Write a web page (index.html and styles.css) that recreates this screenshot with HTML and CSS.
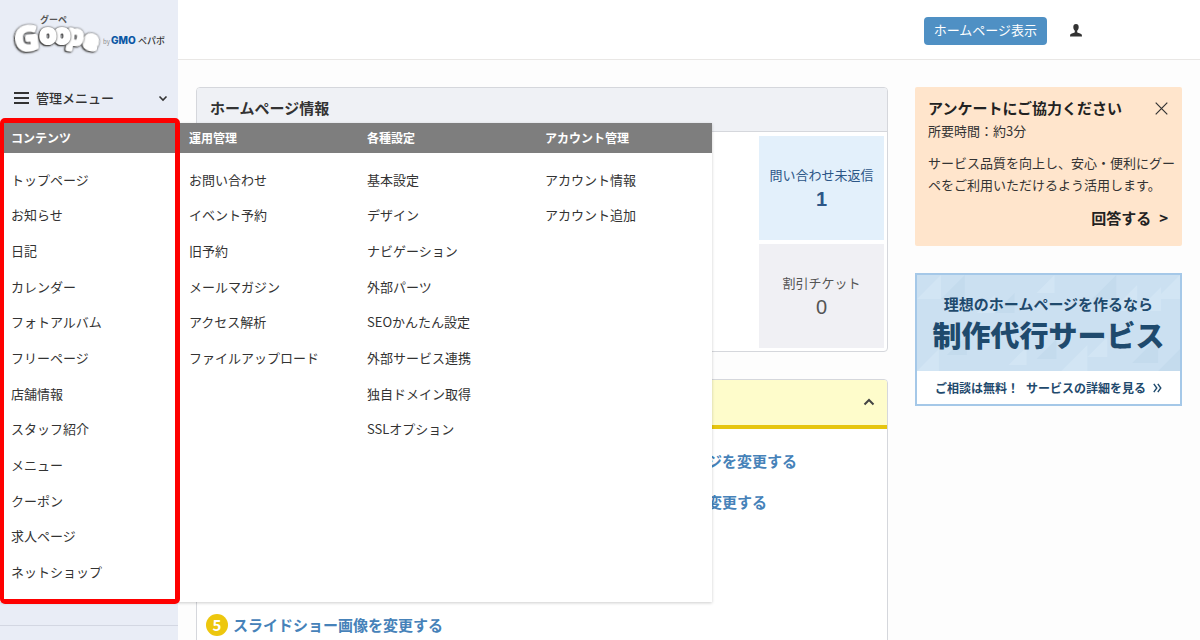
FILE: index.html
```html
<!DOCTYPE html>
<html lang="ja">
<head>
<meta charset="utf-8">
<title>グーペ 管理画面</title>
<link rel="stylesheet" href="styles.css">
</head>
<body>
<div class="app">
  <div class="sidebar">
    <a class="logo" href="#">
      <svg width="156" height="48" viewBox="0 0 156 48">
        <text class="logo-kana" x="29" y="13">グーペ</text>
        <g class="logo-word">
          <text x="72" y="39" transform="rotate(12 79 33)">e</text>
          <text x="56" y="34" transform="rotate(8 63 28)">p</text>
          <text x="43" y="33">o</text>
          <text x="29" y="33">o</text>
          <text class="logo-big" x="4" y="40" transform="rotate(-6 14 28)">G</text>
        </g>
        <text class="logo-by" x="92" y="34">by</text>
        <text class="logo-gmo" x="100" y="34">GMO</text>
        <text class="logo-pepabo" x="127" y="34">ペパボ</text>
      </svg>
    </a>
    <nav class="nav">
      <button class="nav-toggle" type="button" aria-expanded="true">
        <svg width="15" height="12" viewBox="0 0 15 12"><path d="M0 1h15M0 6h15M0 11h15" stroke="#333" stroke-width="2"/></svg>
        <span>管理メニュー</span>
        <svg class="chevron" width="10" height="8" viewBox="0 0 10 8"><path d="M1.500 2.500 5 6l3.500-3.500" fill="none" stroke="#333" stroke-width="1.600"/></svg>
      </button>
      <div class="mega">
        <section class="mega-col">
          <h2>コンテンツ</h2>
          <ul>
            <li><a href="#">トップページ</a></li>
            <li><a href="#">お知らせ</a></li>
            <li><a href="#">日記</a></li>
            <li><a href="#">カレンダー</a></li>
            <li><a href="#">フォトアルバム</a></li>
            <li><a href="#">フリーページ</a></li>
            <li><a href="#">店舗情報</a></li>
            <li><a href="#">スタッフ紹介</a></li>
            <li><a href="#">メニュー</a></li>
            <li><a href="#">クーポン</a></li>
            <li><a href="#">求人ページ</a></li>
            <li><a href="#">ネットショップ</a></li>
          </ul>
        </section>
        <section class="mega-col">
          <h2>運用管理</h2>
          <ul>
            <li><a href="#">お問い合わせ</a></li>
            <li><a href="#">イベント予約</a></li>
            <li><a href="#">旧予約</a></li>
            <li><a href="#">メールマガジン</a></li>
            <li><a href="#">アクセス解析</a></li>
            <li><a href="#">ファイルアップロード</a></li>
          </ul>
        </section>
        <section class="mega-col">
          <h2>各種設定</h2>
          <ul>
            <li><a href="#">基本設定</a></li>
            <li><a href="#">デザイン</a></li>
            <li><a href="#">ナビゲーション</a></li>
            <li><a href="#">外部パーツ</a></li>
            <li><a href="#">SEOかんたん設定</a></li>
            <li><a href="#">外部サービス連携</a></li>
            <li><a href="#">独自ドメイン取得</a></li>
            <li><a href="#">SSLオプション</a></li>
          </ul>
        </section>
        <section class="mega-col">
          <h2>アカウント管理</h2>
          <ul>
            <li><a href="#">アカウント情報</a></li>
            <li><a href="#">アカウント追加</a></li>
          </ul>
        </section>
        <div class="highlight"></div>
      </div>
    </nav>
    <div class="sidebar-rest"></div>
  </div>

  <div class="page">
    <header class="topbar">
      <button class="btn" type="button">ホームページ表示</button>
      <button class="user" type="button" aria-label="アカウント">
        <svg width="12" height="13" viewBox="0 0 12 13"><path d="M6 0C4.200 0 3.300 1.300 3.300 3c0 1.800.700 3 1.500 3.800v1.400C4.500 9 .600 9.300.200 10.800L0 12.500h12l-.200-1.700C11.400 9.300 7.500 9 7.200 8.200V6.800C8 6 8.700 4.800 8.700 3 8.700 1.300 7.800 0 6 0z" fill="#333"/></svg>
      </button>
    </header>

    <div class="content">
      <main class="main">
        <section class="panel">
          <h1 class="panel-head">ホームページ情報</h1>
          <div class="tiles">
            <a class="tile tile-new" href="#"><span>問い合わせ未返信</span><strong>1</strong></a>
            <a class="tile" href="#"><span>割引チケット</span><strong>0</strong></a>
          </div>
        </section>
        <section class="panel">
          <div class="guide-head">
            <button type="button" aria-label="閉じる">
              <svg width="12" height="8" viewBox="0 0 12 8"><path d="m1.500 6.500 4.500-4.500 4.500 4.500" fill="none" stroke="#444" stroke-width="2"/></svg>
            </button>
          </div>
          <ol class="steps">
            <li class="step-tail"><a href="#">ジを変更する</a></li>
            <li class="step-tail"><a href="#">変更する</a></li>
            <li class="step-last"><span class="num">5</span><a href="#">スライドショー画像を変更する</a></li>
          </ol>
        </section>
      </main>

      <aside class="aside">
        <section class="survey">
          <div class="survey-head">
            <h2>アンケートにご協力ください</h2>
            <button type="button" aria-label="閉じる">
              <svg width="13" height="13" viewBox="0 0 13 13"><path d="m.700.700 11.600 11.600M12.300.700.700 12.300" stroke="#333" stroke-width="1.200"/></svg>
            </button>
          </div>
          <p>所要時間：約3分</p>
          <p class="survey-text">サービス品質を向上し、安心・便利にグー<br>ペをご利用いただけるよう活用します。</p>
          <a class="answer" href="#"><span>回答する</span><span>&gt;</span></a>
        </section>

        <a class="banner" href="#">
          <span class="banner-top">
            <svg class="banner-bg" viewBox="0 0 264 96" preserveAspectRatio="none">
              <path d="M0 24 24 0v24zM60 38l18-18v18zM120 18 138 0v18zM195 36l26-26v26zM221 36l24-24v24zM240 24 264 0v24zM145 96l26-26v26zM171 82l20-20v20zM0 96l22-22v22zM92 90l18-18v18z" fill="#d2e5f4"/>
              <path d="M24 24 48 0v24zM78 38l20-20v20zM176 24 200 0v24zM216 88l26-26v26zM242 96l22-22v22zM30 80l20-20v20zM120 84l20-20v20z" fill="#c4dbed"/>
            </svg>
            <span class="banner-lead">理想のホームページを作るなら</span>
            <span class="banner-title">制作代行サービス</span>
          </span>
          <span class="banner-foot">
            <span>ご相談は無料！</span><span>サービスの詳細を見る</span>
            <svg width="9" height="10" viewBox="0 0 9 10"><path d="m.800.800 3 4.200-3 4.200M4.800.800l3 4.200-3 4.200" fill="none" stroke="#1f4a6d" stroke-width="1.400"/></svg>
          </span>
        </a>
      </aside>
    </div>
  </div>
</div>
</body>
</html>
```
FILE: styles.css
```css
* { box-sizing: border-box; }
body {
  margin: 0;
  background: #fdfdfd;
  color: #333;
  font-family: "Noto Sans CJK JP", "Noto Sans", sans-serif;
  font-size: 13px;
  line-height: 20px;
}
h1, h2, p, ul, ol { margin: 0; padding: 0; }
ul, ol { list-style: none; }
a { color: inherit; text-decoration: none; }
button {
  border: 0;
  padding: 0;
  background: none;
  color: inherit;
  font: inherit;
  cursor: pointer;
}
svg { display: block; }

.app { display: flex; height: 100vh; overflow: hidden; }

/* Sidebar */
.sidebar {
  flex: none;
  display: flex;
  flex-direction: column;
  width: 178px;
  background: #e9edf6;
}
.logo { padding: 10px 0 16px 11px; }
.logo text { font-family: "Noto Sans CJK JP", sans-serif; }
.logo .logo-kana { font-size: 9px; font-weight: 700; fill: #555; }
.logo .logo-word text {
  font-family: "Open Sans", sans-serif;
  font-size: 26px;
  font-weight: 600;
  fill: #fff;
  stroke: #fff;
  stroke-width: 4px;
  stroke-linejoin: round;
  filter: drop-shadow(0 0 1px #555) drop-shadow(-1px 1px 0 #555);
}
.logo .logo-word .logo-big { font-size: 32px; }
.logo .logo-by { font-size: 6px; fill: #888; }
.logo .logo-gmo { font-family: Inter, sans-serif; font-size: 10px; font-weight: 800; fill: #0b57a4; }
.logo .logo-pepabo { font-size: 9px; font-weight: 500; fill: #333; }

.nav { position: relative; z-index: 2; }
.nav-toggle {
  display: flex;
  align-items: center;
  gap: 7px;
  width: 100%;
  height: 49px;
  padding: 0 10px 2px 14px;
  font-weight: 500;
}
.chevron { margin-left: auto; }
.sidebar-rest { margin-top: auto; height: 15px; border-top: 1px solid #d3d7e2; }

.mega {
  position: absolute;
  top: 100%;
  left: 0;
  display: grid;
  grid-template-columns: repeat(4, 178px);
  padding-bottom: 12px;
  background: #fff;
  box-shadow: 0 1px 3px rgba(0, 0, 0, .2);
}
.mega h2 {
  padding: 0 11px;
  background: #7e7e7e;
  color: #fff;
  font-size: 12px;
  line-height: 30px;
}
.mega ul {
  display: grid;
  grid-template-rows: repeat(12, 1fr);
  height: 428px;
  margin-top: 9px;
  padding: 0 11px;
}
.mega li { display: flex; align-items: center; white-space: nowrap; }
.highlight {
  position: absolute;
  inset: -5px auto -2px 0;
  width: 180px;
  border: 5px solid #fe0000;
  border-left-width: 4px;
  border-radius: 5px;
  pointer-events: none;
}

/* Page */
.page { flex: 1; min-width: 0; }
.topbar {
  display: flex;
  align-items: center;
  justify-content: flex-end;
  gap: 23px;
  height: 60px;
  padding: 2px 118px 0 0;
  background: #fff;
  border-bottom: 1px solid #e9e7e5;
}
.btn {
  height: 28px;
  padding: 0 10px 2px;
  border-radius: 4px;
  background: #4f90c4;
  color: #fff;
}
.content { display: flex; align-items: flex-start; gap: 27px; padding: 27px 18px; }
.main { flex: 1; min-width: 0; display: grid; gap: 27px; }
.panel { background: #fff; border: 1px solid #d5d7dc; border-radius: 4px; overflow: hidden; }
.panel-head {
  padding: 0 13px 4px;
  background: #eff1f5;
  border-bottom: 1px solid #d5d7dc;
  font-size: 15px;
  line-height: 39px;
}
.tiles { display: grid; justify-content: end; gap: 4px; padding: 4px 3px 3px; }
.tile {
  display: flex;
  flex-direction: column;
  align-items: center;
  justify-content: center;
  gap: 2px;
  width: 125px;
  height: 104px;
  background: #f0f0f4;
  color: #555;
}
.tile strong { font-family: "Liberation Sans", sans-serif; font-size: 20px; font-weight: 400; line-height: 24px; }
.tile-new { background: #e3f0fb; color: #2c5687; }
.tile-new strong { font-weight: 700; }

.guide-head {
  display: flex;
  align-items: center;
  justify-content: flex-end;
  height: 49px;
  padding: 0 12px 2px 0;
  background: #fefccb;
  border-bottom: 4px solid #e6c510;
}
.steps { display: grid; grid-auto-rows: 41px; padding: 11px 9px; }
.steps li { display: flex; align-items: center; gap: 5px; }
.steps a { color: #4682b9; font-size: 15px; font-weight: 700; }
.steps .step-tail { padding-left: 501px; }
.steps .step-last { grid-row: 5; }
.num {
  width: 22px;
  border-radius: 50%;
  background: #edc70e;
  color: #fff;
  font-size: 15px;
  font-weight: 700;
  line-height: 22px;
  text-align: center;
}

/* Aside */
.aside { flex: none; display: grid; grid-template-columns: minmax(0, 1fr); gap: 27px; width: 267px; }
.survey {
  display: flex;
  flex-direction: column;
  padding: 10px 14px 17px 13px;
  border-radius: 2px;
  background: #ffe5cc;
  white-space: nowrap;
}
.survey-head { display: flex; align-items: center; justify-content: space-between; padding-bottom: 2px; }
.survey h2 { color: #222; font-size: 15px; line-height: 22px; }
.survey-text { padding: 11px 0; line-height: 22px; }
.answer {
  align-self: flex-end;
  display: flex;
  gap: 8px;
  color: #222;
  font-size: 15px;
  font-weight: 700;
  line-height: 22px;
}
.banner {
  display: block;
  border: 2px solid #a5c8e8;
  background: #fff;
  color: #1f4a6d;
  font-weight: 700;
  white-space: nowrap;
}
.banner-top {
  position: relative;
  display: flex;
  flex-direction: column;
  align-items: center;
  padding: 18px 0;
  background: #cbe0f1;
}
.banner-bg { position: absolute; inset: 0; width: 100%; height: 100%; }
.banner-lead, .banner-title { position: relative; }
.banner-lead { font-size: 15px; line-height: 22px; }
.banner-title { font-size: 29px; font-weight: 900; line-height: 38px; }
.banner-foot {
  display: flex;
  align-items: center;
  justify-content: center;
  gap: 7px;
  font-size: 12px;
  line-height: 33px;
}
```
